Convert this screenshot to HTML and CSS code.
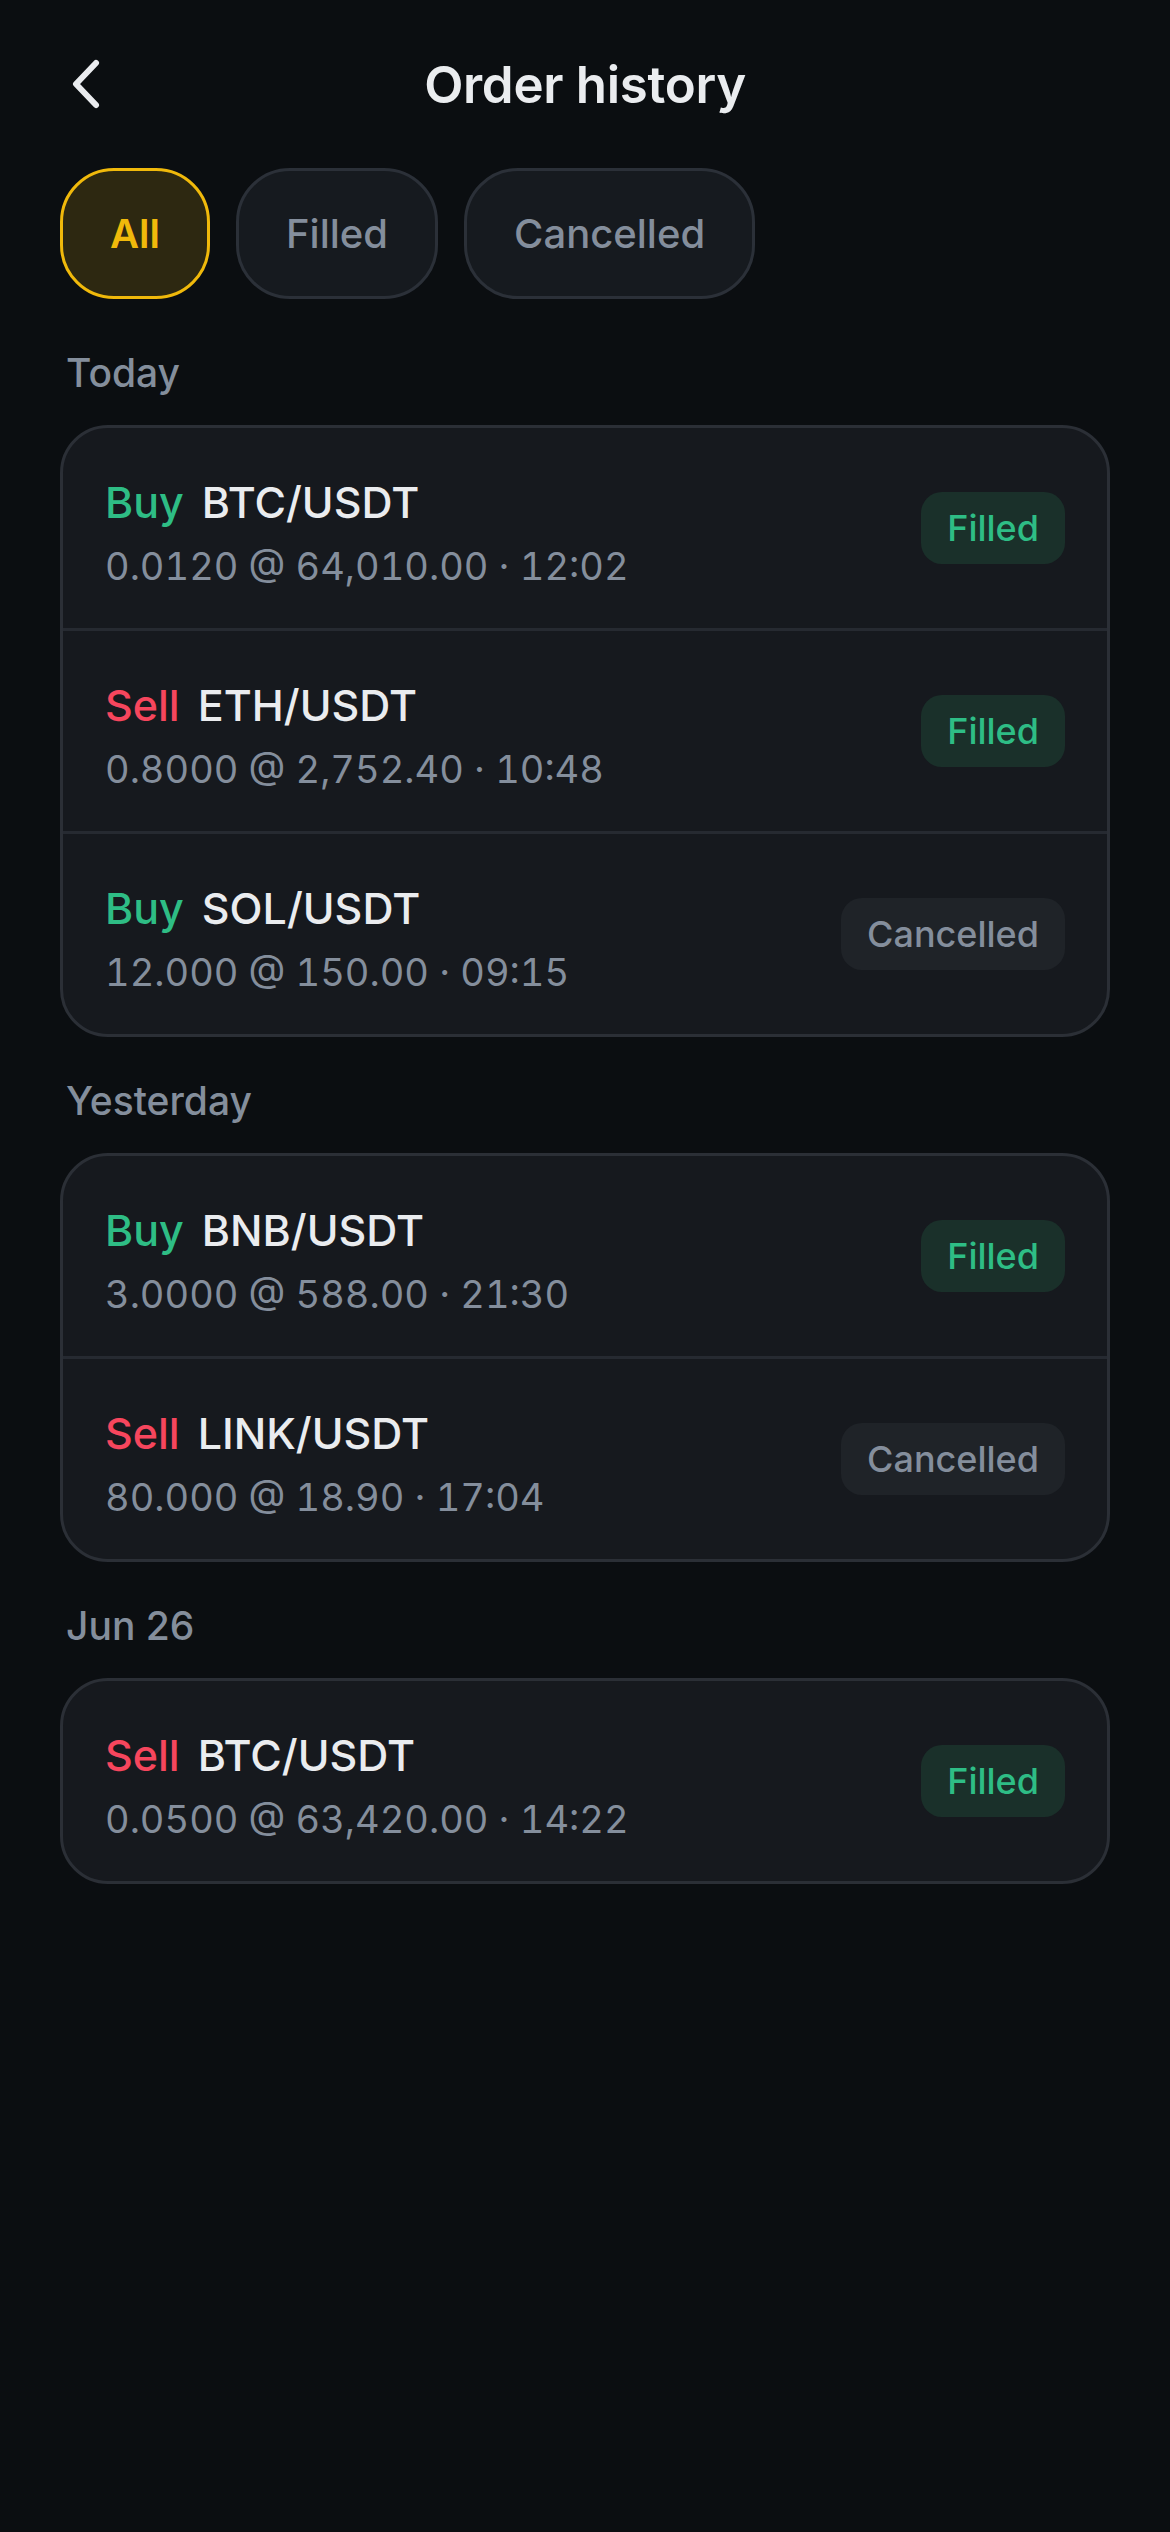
FILE: index.html
```html
<!DOCTYPE html>
<html lang="en">
<head>
<meta charset="UTF-8">
<meta name="viewport" content="width=device-width, initial-scale=1.0">
<title>Order history</title>
<link rel="stylesheet" href="styles.css">
</head>
<body>

<header class="topbar">
  <button class="back-btn" type="button" aria-label="Back">
    <svg width="40" height="56" viewBox="0 0 40 56">
      <polyline points="32,7 12,28 32,49" fill="none" stroke="#eaecef" stroke-width="6" stroke-linecap="round" stroke-linejoin="round"/>
    </svg>
  </button>
  <h1>Order history</h1>
</header>

<!-- filter tabs -->
<div class="filters">
  <button class="chip active" type="button">All</button>
  <button class="chip" type="button">Filled</button>
  <button class="chip" type="button">Cancelled</button>
</div>

<section class="group">
  <h2>Today</h2>
  <div class="card">
    <div class="order">
      <div class="order-info">
        <p class="order-title"><span class="side buy">Buy</span><span>BTC/USDT</span></p>
        <p class="order-meta">0.0120 @ 64,010.00 · 12:02</p>
      </div>
      <span class="status filled">Filled</span>
    </div>
    <div class="order">
      <div class="order-info">
        <p class="order-title"><span class="side sell">Sell</span><span>ETH/USDT</span></p>
        <p class="order-meta">0.8000 @ 2,752.40 · 10:48</p>
      </div>
      <span class="status filled">Filled</span>
    </div>
    <div class="order">
      <div class="order-info">
        <p class="order-title"><span class="side buy">Buy</span><span>SOL/USDT</span></p>
        <p class="order-meta">12.000 @ 150.00 · 09:15</p>
      </div>
      <span class="status cancelled">Cancelled</span>
    </div>
  </div>
</section>

<section class="group">
  <h2>Yesterday</h2>
  <div class="card">
    <div class="order">
      <div class="order-info">
        <p class="order-title"><span class="side buy">Buy</span><span>BNB/USDT</span></p>
        <p class="order-meta">3.0000 @ 588.00 · 21:30</p>
      </div>
      <span class="status filled">Filled</span>
    </div>
    <div class="order">
      <div class="order-info">
        <p class="order-title"><span class="side sell">Sell</span><span>LINK/USDT</span></p>
        <p class="order-meta">80.000 @ 18.90 · 17:04</p>
      </div>
      <span class="status cancelled">Cancelled</span>
    </div>
  </div>
</section>

<section class="group">
  <h2>Jun 26</h2>
  <div class="card">
    <div class="order">
      <div class="order-info">
        <p class="order-title"><span class="side sell">Sell</span><span>BTC/USDT</span></p>
        <p class="order-meta">0.0500 @ 63,420.00 · 14:22</p>
      </div>
      <span class="status filled">Filled</span>
    </div>
  </div>
</section>

</body>
</html>
```

FILE: styles.css
```css
body {
  font-family: Inter, "Noto Sans", Arial, sans-serif;
  margin: 0;
  padding: 0 60px 60px;
  background: #0b0e11;
  color: #eaecef;
  min-height: 100vh;
  box-sizing: border-box;
}

.topbar {
  position: relative;
  height: 96px;
  padding-top: 36px;
  display: flex;
  align-items: center;
  justify-content: center;
}

.back-btn {
  position: absolute;
  left: 4px;
  top: 56px;
  padding: 0;
  border: none;
  background: none;
  display: flex;
  cursor: pointer;
}

.topbar h1 {
  margin: 0;
  font-size: 51px;
  font-weight: 600;
  color: #eaecef;
  letter-spacing: -0.3px;
}

.filters {
  display: flex;
  gap: 26px;
  margin-top: 36px;
  margin-bottom: 50px;
}

.chip {
  height: 131px;
  padding: 0 47px;
  border-radius: 54px;
  border: 3px solid #2b3038;
  background: #161a1f;
  color: #848e9c;
  font-family: inherit;
  font-size: 40px;
  font-weight: 500;
  cursor: pointer;
}

.chip.active {
  border-color: #f0b90b;
  background: #2d2811;
  color: #f0b90b;
  font-weight: 600;
}

.group {
  margin-top: 40px;
}

.group h2 {
  margin: 0 0 29px;
  padding-left: 6px;
  font-size: 39px;
  line-height: 47px;
  font-weight: 500;
  color: #848e9c;
}

.card {
  background: #16191e;
  border: 3px solid #2b2f36;
  border-radius: 48px;
  overflow: hidden;
}

.order {
  display: flex;
  align-items: center;
  justify-content: space-between;
  padding: 47px 42px 38px;
}

.order + .order {
  border-top: 3px solid #262a31;
}

.order-info {
  display: flex;
  flex-direction: column;
  gap: 13px;
}

.order-title {
  margin: 0;
  display: flex;
  gap: 18px;
  font-size: 43px;
  line-height: 54px;
  font-weight: 500;
  color: #eaecef;
}

.side.buy {
  color: #2ebd85;
}

.side.sell {
  color: #f6465d;
}

.order-meta {
  margin: 0;
  font-size: 38px;
  line-height: 48px;
  color: #848e9c;
  font-variant-numeric: tabular-nums;
}

.status {
  height: 72px;
  line-height: 72px;
  padding: 0 26px;
  margin-bottom: 9px;
  border-radius: 21px;
  font-size: 36px;
  font-weight: 500;
}

.status.filled {
  background: #1a302a;
  color: #2ebd85;
}

.status.cancelled {
  background: #1f2328;
  color: #848e9c;
}
```
